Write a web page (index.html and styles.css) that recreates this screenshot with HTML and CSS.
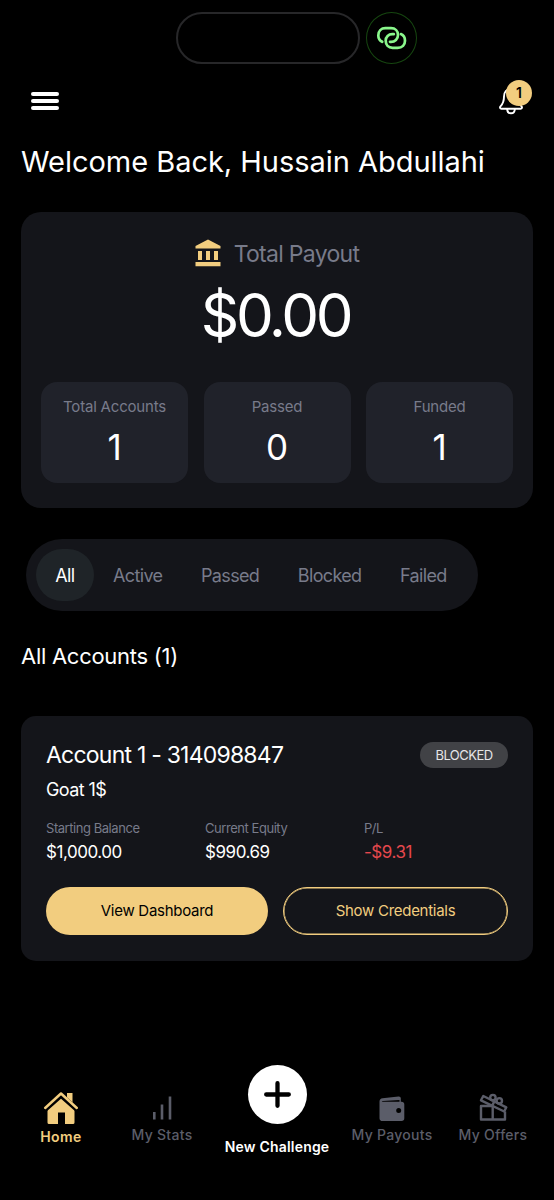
FILE: index.html
```
<!DOCTYPE html>
<html lang="en">
<head>
<meta charset="utf-8">
<meta name="viewport" content="width=device-width, initial-scale=1">
<title>Dashboard</title>
<link rel="stylesheet" href="styles.css">
</head>
<body>
<div class="screen">
  <div class="island">
    <div class="island-pill"></div>
    <div class="island-link">
      <svg width="32" height="26" viewBox="0 0 32 26" fill="none" stroke="#8af78c" stroke-width="2.7" stroke-linecap="round" stroke-linejoin="round">
        <path d="M6.2 16.8C3.6 15.400 2.300 13 2.300 10.400C2.300 6.200 5.200 3.200 9.400 3.200H15C19.400 3.200 22 6.200 22 10C22 14 18.900 16.800 15 16.800H14"/>
        <path d="M17.800 9.200H16.200C12.600 9.200 9.700 11.900 9.700 15.600C9.700 19.900 12.400 22.900 16.600 22.900H21.600C26.300 22.900 29 19.800 29 15.800C29 12.600 27.400 10.200 24.900 9.100"/>
      </svg>
    </div>
  </div>

  <header class="topbar">
    <button class="menu" aria-label="Menu"><span></span><span></span><span></span></button>
    <button class="bell" aria-label="Notifications">
      <svg width="24" height="28" viewBox="0 0 24 28" fill="none" stroke="#fff" stroke-width="1.9" stroke-linejoin="round" stroke-linecap="round">
        <path d="M12 2C7.5 2 5 5.2 5 9.5C5 14.5 4.3 16.500 1.500 19.300C.6 20.300 1 21.700 2.400 21.700H21.600C23 21.700 23.400 20.300 22.500 19.300C19.700 16.500 19 14.500 19 9.500C19 5.200 16.500 2 12 2Z"/>
        <path d="M8.200 22C8.200 24.600 9.800 26.300 12 26.300S15.800 24.600 15.800 22"/>
      </svg>
      <span class="bell-count">1</span>
    </button>
  </header>

  <h1 class="welcome">Welcome Back, Hussain Abdullahi</h1>

  <section class="payout">
    <div class="payout-head">
      <svg width="26" height="28" viewBox="0 0 26 28" fill="#f2cd7f">
        <path d="M13 .5L25.500 7V9.500H.5V7ZM3 12H7V21H3ZM11 12H15V21H11ZM19 12H23V21H19ZM.5 23H25.500V27.200H.5Z"/>
      </svg>
      <span class="payout-label">Total Payout</span>
    </div>
    <div class="payout-sum">$0.00</div>
    <div class="tiles">
      <div class="tile"><span class="tile-label">Total Accounts</span><span class="tile-value">1</span></div>
      <div class="tile"><span class="tile-label">Passed</span><span class="tile-value">0</span></div>
      <div class="tile"><span class="tile-label">Funded</span><span class="tile-value">1</span></div>
    </div>
  </section>

  <div class="filters">
    <button class="filter filter-on">All</button>
    <button class="filter">Active</button>
    <button class="filter">Passed</button>
    <button class="filter">Blocked</button>
    <button class="filter">Failed</button>
  </div>

  <h2 class="list-title">All Accounts (1)</h2>

  <article class="account">
    <div class="account-head">
      <h3 class="account-name">Account 1 - 314098847</h3>
      <span class="status">BLOCKED</span>
    </div>
    <div class="account-plan">Goat 1$</div>
    <dl class="stats">
      <div><dt>Starting Balance</dt><dd>$1,000.00</dd></div>
      <div><dt>Current Equity</dt><dd>$990.69</dd></div>
      <div><dt>P/L</dt><dd class="loss">-$9.31</dd></div>
    </dl>
    <div class="actions">
      <button class="btn btn-fill">View Dashboard</button>
      <button class="btn btn-line">Show Credentials</button>
    </div>
  </article>

  <nav class="tabs">
    <a class="tab tab-home">
      <svg width="36" height="34" viewBox="0 0 36 34">
        <path fill="#f2cd7f" d="M24 2H29.500V12L24 7Z"/>
        <path fill="#f2cd7f" d="M4.500 16.500L18 4.500L31.500 16.500V31.500Q31.500 33 30 33H22V21.500H15V33H6Q4.500 33 4.500 31.500Z"/>
        <path fill="none" stroke="#000" stroke-width="5" d="M1 19.500L18 4.300L35 19.500"/>
        <path fill="none" stroke="#f2cd7f" stroke-width="2.500" stroke-linecap="round" stroke-linejoin="round" d="M2.200 17L18 2.500L33.800 17"/>
      </svg>
      <span>Home</span>
    </a>
    <a class="tab tab-stats">
      <svg width="20" height="24" viewBox="0 0 20 24" fill="none" stroke="#5b5d69" stroke-width="2.600">
        <path d="M2.300 16V23.500M10 8.500V23.500M18 .5V23.500"/>
      </svg>
      <span>My Stats</span>
    </a>
    <a class="tab tab-new">
      <span class="plus">
        <svg width="29" height="29" viewBox="0 0 29 29" fill="none" stroke="#000" stroke-width="4.300" stroke-linecap="round"><path d="M14.500 3.200V25.800M3.200 14.500H25.800"/></svg>
      </span>
      <span>New Challenge</span>
    </a>
    <a class="tab tab-payouts">
      <svg width="26" height="26" viewBox="0 0 26 26">
        <path fill="#5b5d69" fill-rule="evenodd" d="M.5 5.500C.5 3.500 1.700 2.500 3.500 2.200L19.500 .4C21 .3 21.800 1.100 21.800 2.300V5.800H22.500C24.300 5.800 25.300 6.800 25.300 8.500V22.300C25.300 24.100 24.300 25.100 22.500 25.100H3.500C1.700 25.100 .5 24 .5 22.200ZM2.800 5.800H20.500V4.100L4 5C3.200 5 2.800 5.300 2.800 5.800ZM19.700 12A2.500 2.500 0 1 0 19.700 17A2.500 2.500 0 1 0 19.700 12Z"/>
      </svg>
      <span>My Payouts</span>
    </a>
    <a class="tab tab-offers">
      <svg width="29" height="28" viewBox="0 0 29 28" fill="none" stroke="#5b5d69" stroke-width="2.400" stroke-linejoin="round">
        <path d="M12.500 13H2V26.500H26V18.500M13.700 13V26.500"/>
        <path d="M4.300 3L27.300 14.300L25.200 18.500L2 7.300ZM15.200 8.600L13.200 12.600"/>
        <circle cx="13.900" cy="4.600" r="2.700"/>
        <circle cx="20.300" cy="7.800" r="2.700"/>
      </svg>
      <span>My Offers</span>
    </a>
  </nav>
</div>
</body>
</html>
```
FILE: styles.css
```
* { box-sizing: border-box; }
body { margin: 0; background: #000; }
button { border: 0; padding: 0; background: none; font: inherit; color: inherit; }
h1, h2, h3, dl, dd { margin: 0; font-weight: 400; }
svg { display: block; }

.screen {
  width: 554px;
  height: 1200px;
  display: flex;
  flex-direction: column;
  background: #000;
  color: #fff;
  font-family: Inter, "Liberation Sans", sans-serif;
  white-space: nowrap;
  overflow: hidden;
}

.island { display: flex; gap: 6px; padding: 12px 0 0 176px; height: 64px; flex: none; }
.island-pill { width: 184px; height: 52px; border: 2px solid #272729; border-radius: 26px; }
.island-link {
  width: 51px; height: 52px; border: 1.500px solid #164610; border-radius: 50%;
  display: grid; place-items: center;
}

.topbar { display: flex; justify-content: space-between; align-items: center; height: 74px; padding: 0 31px; flex: none; }
.menu { display: grid; gap: 3.500px; width: 28px; }
.menu span { height: 3.800px; border-radius: 2px; background: #fff; }
.bell { position: relative; width: 24px; height: 28px; }
.bell-count {
  position: absolute; left: 7px; top: -7px; width: 26px; height: 26px; border-radius: 50%;
  background: #f2cd7f; color: #000; font-size: 14px; font-weight: 600; line-height: 26px; text-align: center;
}

.welcome { height: 48px; line-height: 48px; padding-left: 21px; font-size: 29px; letter-spacing: -0.030px; flex: none; }

.payout {
  flex: none; height: 296px; margin: 26.400px 21px 0; padding: 27px 20px 0;
  border-radius: 20px; background: #14151a;
}
.payout-head { display: flex; justify-content: center; align-items: center; gap: 13px; height: 28px; }
.payout-label { font-size: 23px; line-height: 28px; color: #787b8a; letter-spacing: -0.700px; padding-top: 2px; }
.payout-sum { height: 96px; line-height: 96px; text-align: center; font-size: 60px; letter-spacing: -3.400px; padding-right: 3px; }
.tiles { display: grid; grid-template-columns: repeat(3, 1fr); gap: 15.500px; margin-top: 19px; }
.tile { height: 101px; border-radius: 16px; background: #20222a; display: flex; flex-direction: column; align-items: center; padding-top: 15px; }
.tile-label { font-size: 15px; line-height: 20px; color: #787b8a; letter-spacing: -0.200px; }
.tile-value { font-size: 35px; line-height: 60px; }

.filters {
  flex: none; align-self: flex-start; display: flex; align-items: center;
  width: 452px; height: 72px; margin: 31px 0 0 26px; padding: 0 10px; border-radius: 36px; background: #14151a;
}
.filter { height: 52px; padding: 1px 19.300px 0; border-radius: 26px; color: #787b8a; font-size: 18px; letter-spacing: -0.650px; }
.filter-on { background: #1f2428; color: #fff; }

.list-title { flex: none; height: 36px; line-height: 36px; margin: 27px 0 0 21px; font-size: 22px; letter-spacing: -0.270px; }

.account { flex: none; height: 245px; margin: 41.400px 21px 0; padding: 25px 25px 0; border-radius: 15px; background: #14151a; }
.account-head { display: flex; justify-content: space-between; align-items: center; height: 28px; }
.account-name { font-size: 23px; line-height: 28px; letter-spacing: -0.780px; padding-top: 1px; }
.status { width: 88px; height: 26px; border-radius: 13px; background: #414246; color: #e6e6e8; font-size: 13px; line-height: 26px; text-align: center; letter-spacing: -0.550px; }
.account-plan { font-size: 18px; line-height: 24px; margin-top: 9px; letter-spacing: -0.600px; }
.stats { display: grid; grid-template-columns: 159px 159px 1fr; margin-top: 17px; }
.stats dt { font-size: 13px; line-height: 18px; color: #787b8a; letter-spacing: -0.450px; }
.stats dd { font-size: 17px; line-height: 24px; margin-top: 3px; letter-spacing: -0.450px; }
.stats .loss { color: #e5484d; }
.actions { display: grid; grid-template-columns: 222px 225px; gap: 15px; margin-top: 23px; }
.btn { height: 48px; border-radius: 24px; font-size: 15px; letter-spacing: -0.280px; }
.btn-fill { background: #f2cd7f; color: #000; }
.btn-line { border: 1.500px solid #f2cd7f; color: #f2cd7f; box-shadow: inset 0 0 0 0.500px #f2cd7f; }

.tabs { flex: none; display: flex; justify-content: center; margin-top: 104px; height: 134px; }
.tab { display: flex; flex-direction: column; align-items: center; color: #5b5d69; font-size: 14px; font-weight: 500; line-height: 18px; letter-spacing: 0.280px; }
.tab-home { width: 80px; padding-top: 26px; gap: 3px; color: #f2cd7f; font-weight: 600; letter-spacing: 0.400px; }
.tab-stats { width: 122px; padding-top: 31px; gap: 6px; }
.tab-new { width: 108px; color: #fff; font-weight: 600; gap: 14px; letter-spacing: 0.200px; }
.tab-payouts { width: 122px; padding-top: 31px; gap: 4px; }
.tab-offers { width: 80px; padding-top: 28px; gap: 5px; }
.plus { width: 59px; height: 59px; border-radius: 50%; background: #fff; display: grid; place-items: center; flex: none; }
```
